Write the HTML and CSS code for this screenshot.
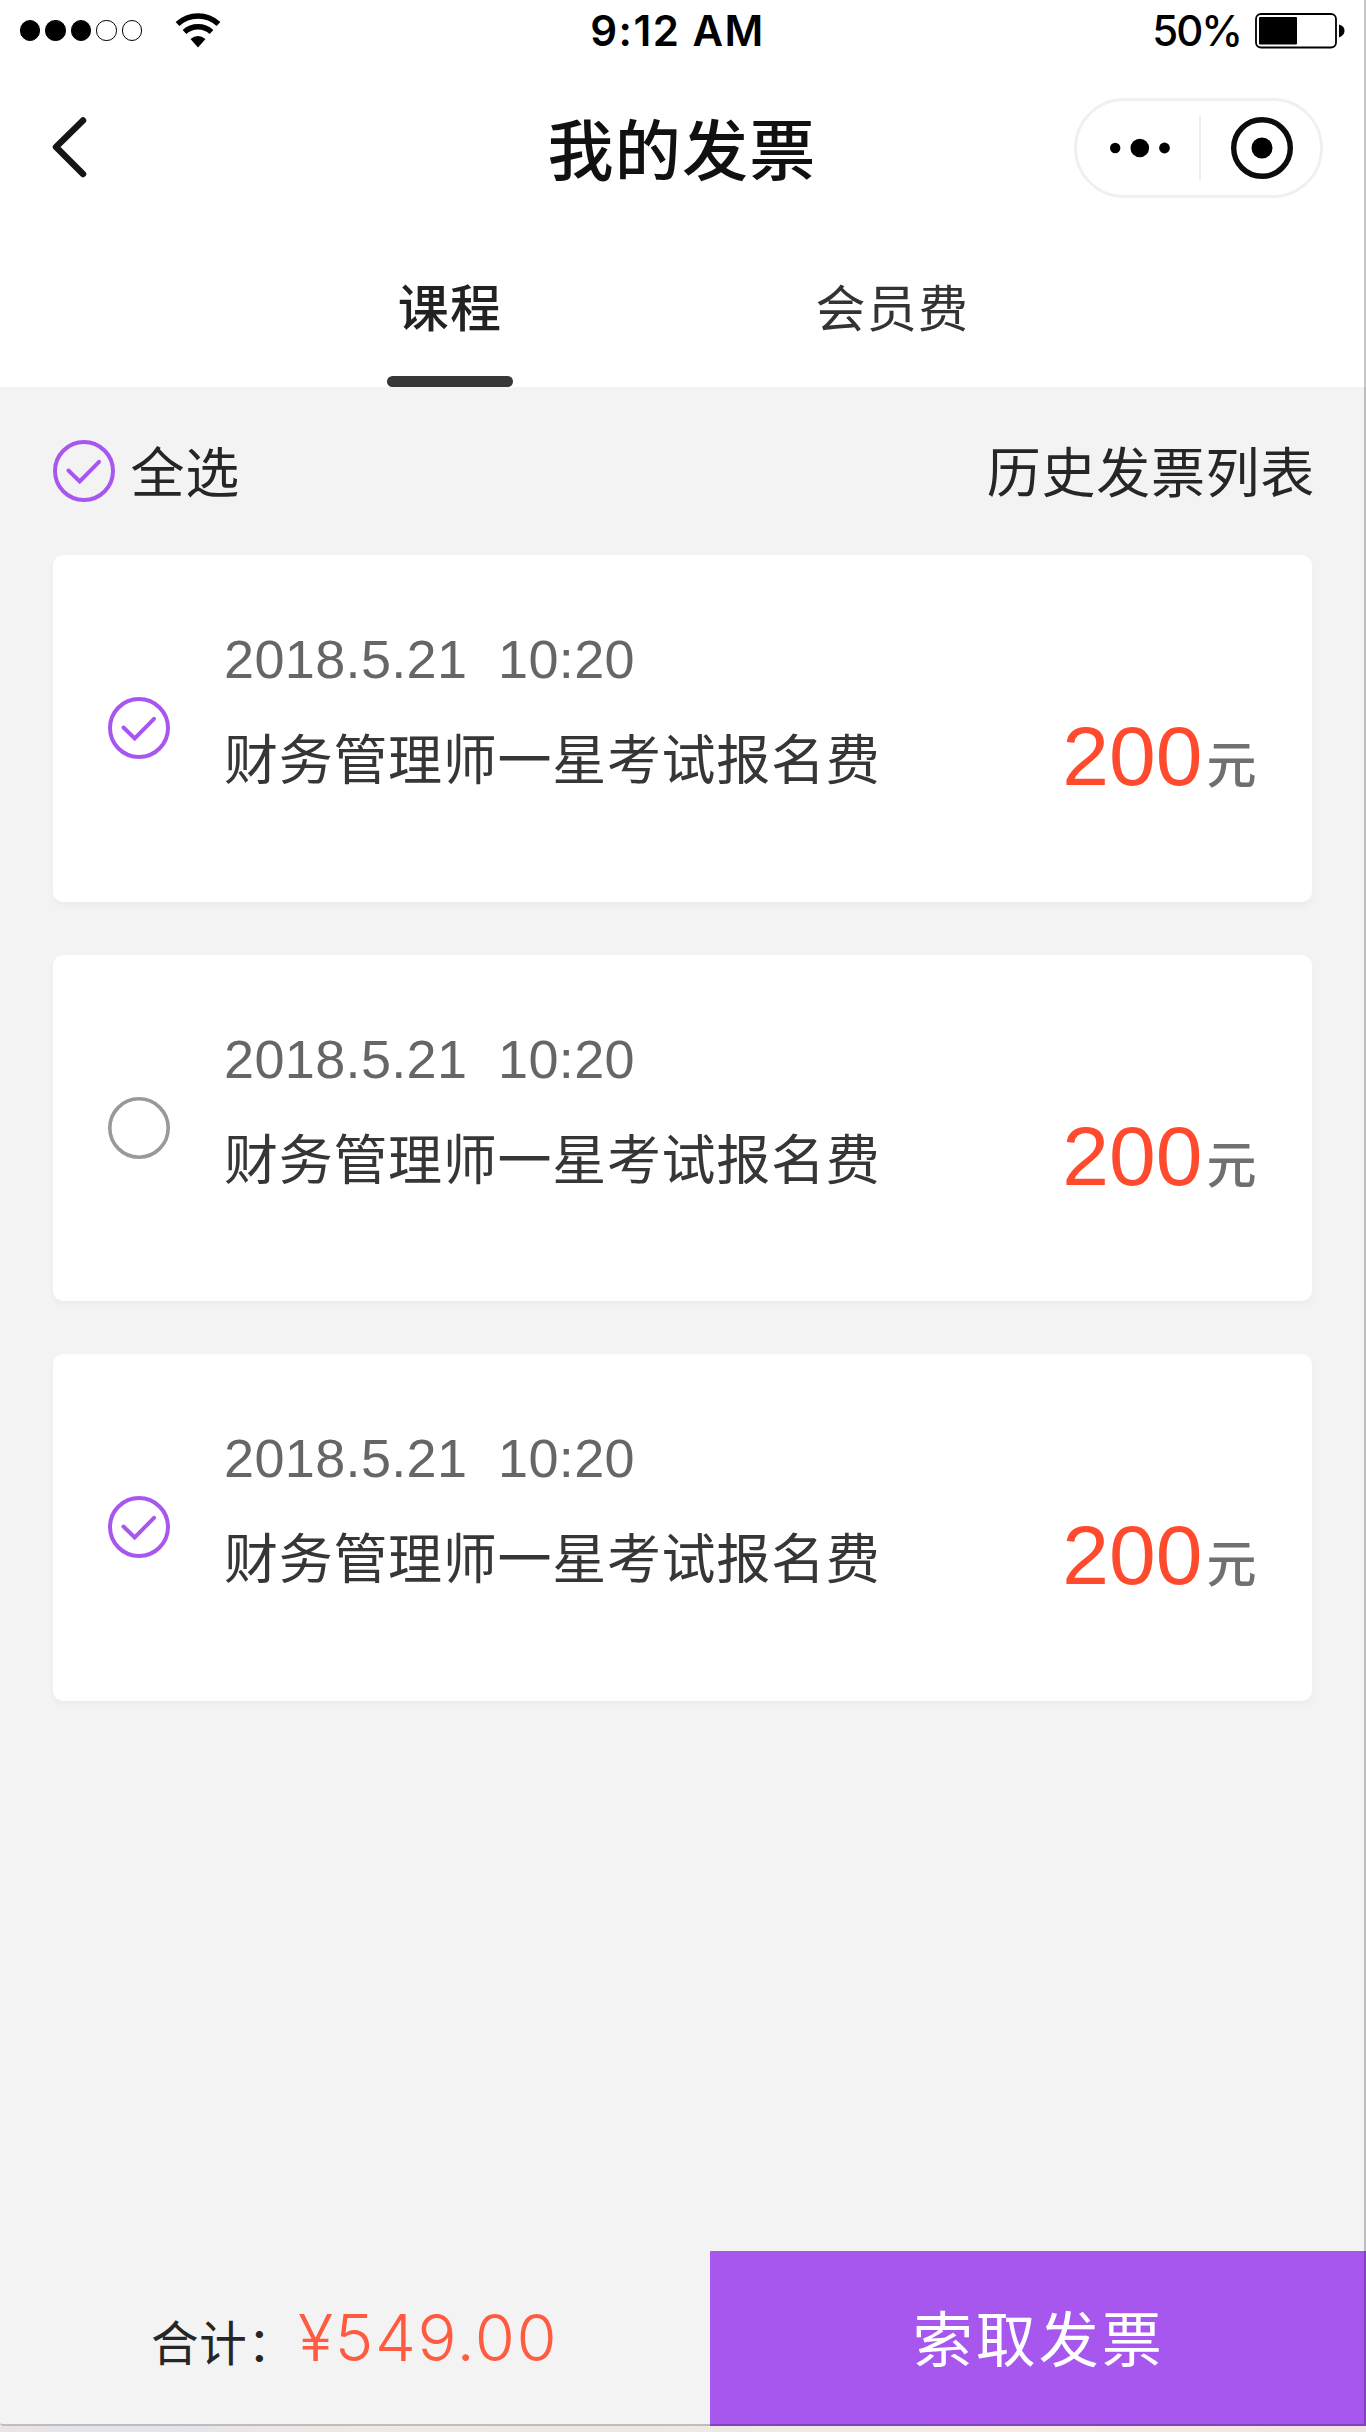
FILE: index.html
```html
<!DOCTYPE html>
<html lang="zh-CN">
<head>
<meta charset="utf-8">
<title>我的发票</title>
<link rel="stylesheet" href="styles.css">
</head>
<body>
<svg class="defs" width="0" height="0">
  <symbol id="checked" viewBox="0 0 62 62">
    <circle cx="31" cy="31" r="29" fill="none" stroke="#a757ee" stroke-width="4"/>
    <path d="M15.500 30.500 L26.700 41.500 L46 21.800" fill="none" stroke="#a757ee" stroke-width="4" stroke-linecap="round"/>
  </symbol>
  <symbol id="unchecked" viewBox="0 0 62 62">
    <circle cx="31" cy="31" r="29.2" fill="none" stroke="#999" stroke-width="3.6"/>
  </symbol>
</svg>
<div class="screen">
  <header class="header">
    <div class="status">
      <div class="signal">
        <i class="dot full"></i><i class="dot full"></i><i class="dot full"></i><i class="dot"></i><i class="dot"></i>
        <svg class="wifi" width="46" height="36" viewBox="0 0 46 36">
          <path d="M2.5 11 A30 30 0 0 1 43.5 11" fill="none" stroke="#000" stroke-width="5.5"/>
          <path d="M9.5 19 A20 20 0 0 1 36.5 19" fill="none" stroke="#000" stroke-width="5.5"/>
          <path d="M15.5 26 Q23 20 30.5 26 L23 34.500Z"/>
        </svg>
      </div>
      <div class="time">9:12 AM</div>
      <div class="power">
        <span class="percent">50%</span>
        <svg width="91" height="36" viewBox="0 0 91 36">
          <rect x="1" y="1" width="80" height="33.500" rx="5" fill="none" stroke="#000" stroke-width="1.8"/>
          <rect x="4" y="4" width="38" height="27.500" rx="1"/>
          <path d="M84 11.500 Q89.500 13 89.500 17.800 Q89.500 22.500 84 24.500Z"/>
        </svg>
      </div>
    </div>
    <div class="nav">
      <svg class="back" width="40" height="64" viewBox="0 0 40 64">
        <path d="M33 4.500 L6 31 L33 58" fill="none" stroke="#151515" stroke-width="6.500" stroke-linecap="round" stroke-linejoin="round"/>
      </svg>
      <h1 class="title">我的发票</h1>
      <div class="capsule">
        <svg width="60" height="20" viewBox="0 0 60 20">
          <circle cx="5.200" cy="10" r="5.200"/><circle cx="29.800" cy="10" r="9.300"/><circle cx="54.500" cy="10" r="5.400"/>
        </svg>
        <span class="divider"></span>
        <svg width="64" height="64" viewBox="0 0 64 64">
          <circle cx="32" cy="32" r="28.300" fill="none" stroke="#0c0c0c" stroke-width="5.400"/><circle cx="32" cy="32" r="10.500"/>
        </svg>
      </div>
    </div>
    <nav class="tabs">
      <span class="tab active">课程</span>
      <span class="tab">会员费</span>
    </nav>
  </header>

  <div class="toolbar">
    <div class="select-all"><svg class="check"><use href="#checked"/></svg><span class="caption">全选</span></div>
    <span class="caption">历史发票列表</span>
  </div>

  <main class="list">
    <article class="card">
      <svg class="check"><use href="#checked"/></svg>
      <div class="info"><div class="date">2018.5.21&nbsp; 10:20</div><div class="name">财务管理师一星考试报名费</div></div>
      <div class="price"><span class="amount">200</span><span class="unit">元</span></div>
    </article>
    <article class="card">
      <svg class="check"><use href="#unchecked"/></svg>
      <div class="info"><div class="date">2018.5.21&nbsp; 10:20</div><div class="name">财务管理师一星考试报名费</div></div>
      <div class="price"><span class="amount">200</span><span class="unit">元</span></div>
    </article>
    <article class="card">
      <svg class="check"><use href="#checked"/></svg>
      <div class="info"><div class="date">2018.5.21&nbsp; 10:20</div><div class="name">财务管理师一星考试报名费</div></div>
      <div class="price"><span class="amount">200</span><span class="unit">元</span></div>
    </article>
  </main>

  <footer class="footer">
    <div class="total"><span class="label">合计：</span><span class="sum">¥549.00</span></div>
    <div class="submit">索取发票</div>
  </footer>
  <div class="frame"></div>
</div>
<div class="desktop"></div>
</body>
</html>
```
FILE: styles.css
```css
* { box-sizing: border-box; }
body { margin: 0; width: 1366px; height: 2432px; background: #fff; font-family: "Noto Sans CJK SC", sans-serif; color: #262626; overflow: hidden; }
svg { display: block; flex: none; }
.defs { position: absolute; }
.screen { position: relative; height: 2426px; background: #f3f3f3; display: flex; flex-direction: column; }
/* Window edge drawn over the content */
.frame { position: absolute; inset: 0; border: solid rgba(0, 0, 0, .22); border-width: 0 2px 2px 0; border-bottom-left-radius: 3px; }
.desktop { height: 6px; background: linear-gradient(90deg, #e9e4e6, #e3e3ec 10%, #f2e8e3 27%, #ece8e6 45%, #f5ebe3 75%, #f3e5e0); }

.header { height: 387px; background: #fff; flex: none; }
.status { height: 61px; display: grid; grid-template-columns: 1fr auto 1fr; align-items: center; padding: 0 20px 0 20px; }
.signal { display: flex; align-items: center; gap: 5.300px; }
.dot { width: 20.200px; height: 20.200px; border: 1.600px solid #000; border-radius: 50%; flex: none; }
.dot.full { background: #000; }
.wifi { margin-left: 28px; }
.time, .percent { font: 500 42px/60px Inter, sans-serif; color: #000; white-space: nowrap; }
.time { letter-spacing: 1.500px; font-weight: 560; margin-left: -11px; }
.percent { font-weight: 450; letter-spacing: -2px; }
.power { display: flex; align-items: center; justify-content: flex-end; gap: 14px; }
.nav { height: 174px; display: grid; grid-template-columns: 1fr auto 1fr; align-items: center; padding: 0 43px 0 50px; }
.title { margin: 0 9px 4px 0; font-size: 66px; font-weight: 500; line-height: 90px; letter-spacing: 1.300px; color: #111; }
.capsule { justify-self: end; width: 249px; height: 100px; border: 3px solid #f0f0f0; border-radius: 50px; display: flex; align-items: center; padding-left: 33px; }
.divider { width: 2px; height: 64px; background: #eee; margin: 0 29px 0 29px; }
.tabs { height: 152px; display: flex; padding-left: 386.500px; gap: 303px; color: #333; }
.tab { font-size: 50px; line-height: 140px; letter-spacing: 1.300px; height: 152px; }
.active { width: 126px; text-align: center; text-indent: 1px; font-weight: 500; font-size: 51px; color: #222; display: flex; flex-direction: column; justify-content: space-between; }
.active::after { content: ""; height: 11px; border-radius: 6px; background: #373737; }

.toolbar { height: 168px; flex: none; display: flex; justify-content: space-between; align-items: center; padding: 0 51px 0 52.500px; font-size: 54px; line-height: 80px; letter-spacing: .7px; }
.select-all { display: flex; align-items: center; gap: 16px; }
.caption { padding-bottom: 3px; }
.check { width: 62px; height: 62px; }
.list { flex: 1; padding: 0 54px 0 53px; display: flex; flex-direction: column; gap: 53px; }
.card { height: 346.500px; background: #fff; border-radius: 10px; box-shadow: 0 4px 6px rgba(0, 0, 0, .03); display: flex; padding: 0 55.500px 0 54.500px; }
.card .check { margin-top: 142px; }
.info { margin: 64px 0 0 54.500px; }
.date { font: 54px/80px "Liberation Sans", sans-serif; letter-spacing: .35px; color: #666; }
.name { font-size: 54px; line-height: 80px; letter-spacing: .7px; color: #363636; margin-top: 18px; }
.price { margin: 141px 0 0 auto; display: flex; align-items: baseline; height: 120px; }
.amount { font: 84px/120px "Liberation Sans", sans-serif; color: #ff4a2d; }
.unit { font-size: 50px; line-height: 70px; font-weight: 500; color: #707070; margin-left: 4px; position: relative; top: -2px; }

.footer { height: 175px; flex: none; display: flex; }
.total { width: 709.500px; display: flex; align-items: baseline; padding: 47px 0 0 151px; }
.label { font-size: 47.500px; line-height: 80px; letter-spacing: .8px; width: 147px; white-space: nowrap; }
.sum { font: 350 65px/80px Inter, sans-serif; letter-spacing: 1.600px; color: #ff5b40; }
.submit { flex: 1; background: #a757ee; color: #fff; text-align: center; text-indent: 2px; font-size: 60px; line-height: 170px; letter-spacing: 3px; }
```
